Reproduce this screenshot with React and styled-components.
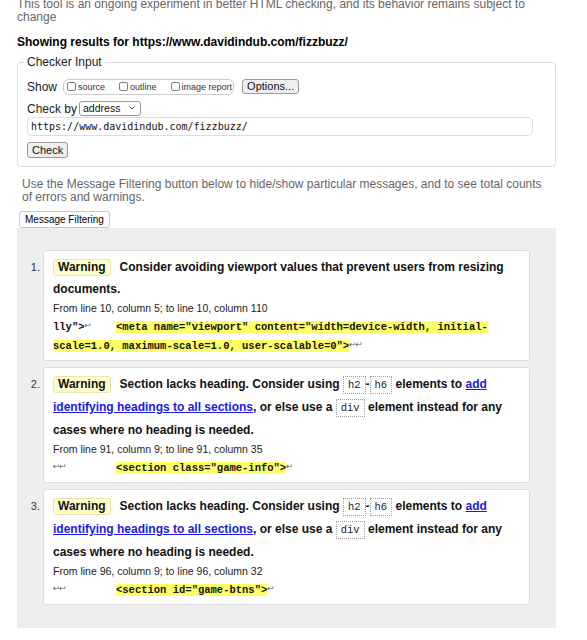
import React from 'react';
import styled, { createGlobalStyle } from 'styled-components';

const GlobalStyle = createGlobalStyle`
  html, body { margin: 0; padding: 0; background: #fff; }
  body {
    font-family: "Liberation Sans", Arial, Helvetica, sans-serif;
    color: #000;
    overflow: hidden;
  }
`;

const Page = styled.main`
  padding: 0 31px 0 17px;
`;

const Intro = styled.p`
  margin: -2px 0 0;
  font-size: 12px;
  line-height: 13px;
  color: #666;
`;

const ResultsTitle = styled.h2`
  margin: 11px 0 0;
  font-size: 12px;
  line-height: 15px;
  font-weight: bold;
`;

const CheckerFieldset = styled.fieldset`
  margin: 5px 0 0;
  padding: 9px 9px 8px;
  border: 1px solid #ddd;
  border-radius: 4px;
  min-width: 0;
`;

const Legend = styled.legend`
  margin-left: -3px;
  padding: 0 3px;
  font-size: 12px;
  line-height: 15px;
  color: #222;
`;

const Form = styled.div`
  display: flex;
  flex-direction: column;
  align-items: flex-start;
`;

const Row = styled.div`
  display: flex;
  align-items: center;
  gap: ${(p) => p.$gap || 6}px;
  height: ${(p) => p.$h || 15}px;
  margin-bottom: ${(p) => p.$mb || 0}px;
  font-size: 12px;
  color: #222;
`;

const ShowOptions = styled.div`
  display: flex;
  align-items: center;
  gap: 14px;
  height: 14px;
  padding: 0 1px 0 3px;
  border: 1px solid #ccc;
  border-radius: 6px;
`;

const CheckLabel = styled.label`
  display: inline-flex;
  align-items: center;
  gap: 2px;
  font-size: 9px;
  color: #333;
`;

const CheckBox = styled.input.attrs({ type: 'checkbox' })`
  appearance: none;
  margin: 0;
  width: 9px;
  height: 9px;
  border: 1px solid #808080;
  border-radius: 2px;
  background: #fff;
`;

const SmallButton = styled.button`
  margin: 0;
  height: ${(p) => p.$h || 15}px;
  padding: 0 4px;
  font-family: "Liberation Sans", Arial, sans-serif;
  font-size: 11px;
  line-height: 1;
  color: #111;
  background: #efefef;
  border: 1px solid #999;
  border-radius: 3px;
`;

const OptionsButton = styled(SmallButton)`
  margin-left: 2px;
`;

const SelectWrap = styled.span`
  position: relative;
  display: inline-block;
  margin-left: 1px;
`;

const Select = styled.select`
  appearance: none;
  margin: 0;
  width: 62px;
  height: 15px;
  padding: 0 0 0 3px;
  font-family: "Liberation Sans", Arial, sans-serif;
  font-size: 10.5px;
  line-height: 13px;
  color: #111;
  background: #fff;
  border: 1px solid #999;
  border-radius: 3px;
`;

const Chevron = styled.svg`
  position: absolute;
  right: 6px;
  top: 5px;
  width: 6px;
  height: 4px;
  pointer-events: none;
`;

const UrlInput = styled.input`
  box-sizing: border-box;
  margin: 0 0 6px;
  width: 506px;
  height: 19px;
  padding: 0 3px;
  font-family: "DejaVu Sans Mono", "Liberation Mono", monospace;
  font-size: 10px;
  color: #111;
  background: #fff;
  border: 1px solid #ddd;
  border-radius: 5px;
  outline: none;
`;

const Advice = styled.p`
  margin: 11px 10px 0 5px;
  font-size: 12px;
  line-height: 13px;
  color: #666;
`;

const FilterButton = styled.button`
  display: block;
  margin: 7px 0 0 2px;
  height: 17px;
  padding: 0 5px;
  font-family: "Liberation Sans", Arial, sans-serif;
  font-size: 10px;
  color: #000;
  background: #fff;
  border: 1px solid #c8c8c8;
  border-radius: 3px;
`;

const Results = styled.ol`
  margin: 0;
  padding: 22px 26px 23px 26px;
  background: #eeeeee;
  list-style: decimal;
`;

const Message = styled.li`
  padding: 5px 9px 4px;
  background: #fff;
  border: 1px solid #ddd;
  border-radius: 3px;
  & + & { margin-top: 6px; }
  &::marker {
    font-size: 11px;
    font-weight: normal;
    color: #333;
  }
`;

const MessageText = styled.p`
  margin: 0;
  font-size: 12px;
  line-height: 22px;
  font-weight: bold;
  color: #111;
`;

const Badge = styled.span`
  display: inline-block;
  margin-right: 9px;
  padding: 0 4px;
  line-height: 15px;
  background: #ffffcc;
  border: 1px solid #e9e4b0;
  border-radius: 3px;
  color: #111;
`;

const Code = styled.code`
  font-family: "Liberation Mono", "Courier New", monospace;
  font-weight: normal;
  font-size: 10.5px;
  padding: 2px 4px;
  border: 1px dotted #a0a0a0;
  color: #222;
`;

const Link = styled.a`
  color: #1a1ae6;
  text-decoration: underline;
`;

const Location = styled.p`
  margin: 0 0 1px;
  font-size: 10.5px;
  line-height: 17px;
  color: #222;
`;

const Extract = styled.pre`
  margin: 0;
  font-family: "Liberation Mono", "Courier New", monospace;
  font-weight: bold;
  font-size: 10.5px;
  line-height: 19px;
  white-space: pre-wrap;
  color: #111;
`;

const Highlight = styled.mark`
  background: #ffff66;
  color: inherit;
`;

const Return = styled.span`
  display: inline-block;
  width: 6.3px;
  overflow: hidden;
  font-family: "DejaVu Sans", sans-serif;
  font-size: 8px;
  font-weight: normal;
  line-height: 1;
  color: #555;
  text-decoration: underline dotted #999;
  text-underline-offset: 3px;
`;

const Br = () => <Return title="Line break">↩</Return>;

const sectionText = (
  <>
    Section lacks heading. Consider using <Code>h2</Code>-<Code>h6</Code> elements to{' '}
    <Link href="#">add identifying headings to all sections</Link>, or else use a <Code>div</Code> element
    instead for any cases where no heading is needed.
  </>
);

const messages = [
  {
    text: <>Consider avoiding viewport values that prevent users from resizing documents.</>,
    location: 'From line 10, column 5; to line 10, column 110',
    extract: (
      <>
        {'lly">'}<Br />{'    '}
        <Highlight>{'<meta name="viewport" content="width=device-width, initial-\nscale=1.0, maximum-scale=1.0, user-scalable=0">'}</Highlight>
        <Br /><Br />
      </>
    ),
  },
  {
    text: sectionText,
    location: 'From line 91, column 9; to line 91, column 35',
    extract: (
      <>
        <Br /><Br />{'        '}
        <Highlight>{'<section class="game-info">'}</Highlight>
        <Br />
      </>
    ),
  },
  {
    text: sectionText,
    location: 'From line 96, column 9; to line 96, column 32',
    extract: (
      <>
        <Br /><Br />{'        '}
        <Highlight>{'<section id="game-btns">'}</Highlight>
        <Br />
      </>
    ),
  },
];

export default function App() {
  return (
    <>
      <GlobalStyle />
      <Page>
        <Intro>
          This tool is an ongoing experiment in better HTML checking, and its behavior remains subject to change
        </Intro>
        <ResultsTitle>Showing results for https://www.davidindub.com/fizzbuzz/</ResultsTitle>

        <CheckerFieldset>
          <Legend>Checker Input</Legend>
          <Form>
            <Row $gap={6} $h={15} $mb={7}>
              <span>Show</span>
              <ShowOptions>
                <CheckLabel><CheckBox />source</CheckLabel>
                <CheckLabel><CheckBox />outline</CheckLabel>
                <CheckLabel><CheckBox />image report</CheckLabel>
              </ShowOptions>
              <OptionsButton $h={15}>Options...</OptionsButton>
            </Row>
            <Row $gap={1} $h={15} $mb={1}>
              <span>Check by</span>
              <SelectWrap>
                <Select defaultValue="address">
                  <option value="address">address</option>
                  <option value="file">file upload</option>
                  <option value="text">text input</option>
                </Select>
                <Chevron viewBox="0 0 6 4">
                  <path d="M0.5 0.5 L3 3 L5.5 0.5" fill="none" stroke="#333" strokeWidth="0.9" />
                </Chevron>
              </SelectWrap>
            </Row>
            <UrlInput readOnly value="https://www.davidindub.com/fizzbuzz/" />
            <SmallButton $h={16}>Check</SmallButton>
          </Form>
        </CheckerFieldset>

        <Advice>
          Use the Message Filtering button below to hide/show particular messages, and to see total counts of
          errors and warnings.
        </Advice>
        <FilterButton>Message Filtering</FilterButton>

        <Results>
          {messages.map((m, i) => (
            <Message key={i}>
              <MessageText>
                <Badge>Warning</Badge>
                {m.text}
              </MessageText>
              <Location>{m.location}</Location>
              <Extract>{m.extract}</Extract>
            </Message>
          ))}
        </Results>
      </Page>
    </>
  );
}
